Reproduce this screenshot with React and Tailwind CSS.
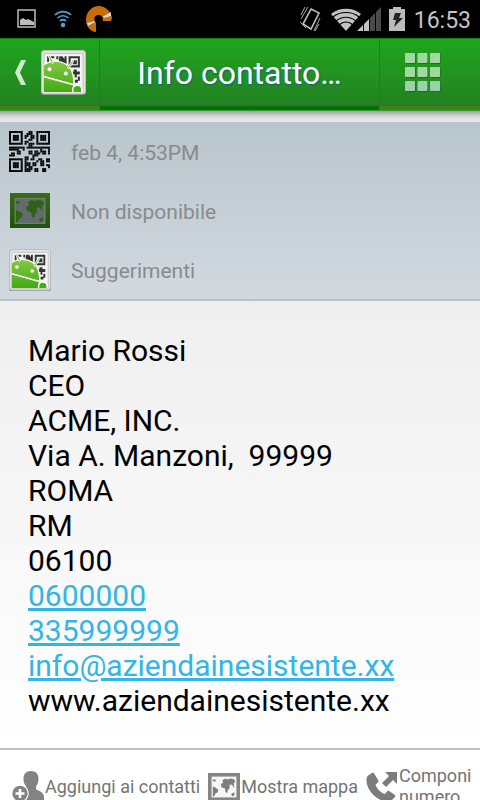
const QR = [
  '#######...##..#######',
  '#.....#..###..#.....#',
  '#.###.#.##.##.#.###.#',
  '#.###.#.#..##.#.###.#',
  '#.###.#...##..#.###.#',
  '#.....#.##....#.....#',
  '#######.#.###.#######',
  '..........##.........',
  '########.############',
  '#####..#........#...#',
  '....##....##.##.###.#',
  '.##.##....##.###.##.#',
  '###.........###......',
  '........##..#........',
  '#######.##.##..##..##',
  '#.....#.#.....#.##.##',
  '#.###.#.###.##..##...',
  '#.###.#.###.##..##.##',
  '#.###.#.#.##........#',
  '#.....#.####.##..##..',
  '#######.###..##..##..',
]

const GRID = [0, 1, 2]

function QrModules() {
  return QR.map((row, y) =>
    [...row].map((cell, x) =>
      cell === '#' ? <rect key={`${x}-${y}`} x={x} y={y} width="1.03" height="1.03" /> : null,
    ),
  )
}

function QrIcon() {
  return (
    <svg viewBox="0 0 21 21" className="size-[41px]" aria-hidden="true">
      <QrModules />
    </svg>
  )
}

function DroidIcon({ className }) {
  return (
    <svg viewBox="0 0 44 44" className={className} aria-hidden="true">
      <defs>
        <linearGradient id="droidBody" x1="0" y1="0" x2="0" y2="1">
          <stop offset="0" stopColor="#86c93f" />
          <stop offset="1" stopColor="#3fa816" />
        </linearGradient>
        <clipPath id="droidClip">
          <rect x="3" y="3" width="38" height="38" />
        </clipPath>
      </defs>
      <rect x="0" y="1" width="44" height="43" rx="3" fill="#777" opacity="0.7" />
      <rect x="0.5" y="0.5" width="43" height="42.5" rx="3" fill="#e3e3e3" stroke="#bcbcbc" />
      <rect x="3" y="3.5" width="38" height="37" fill="#f4f4f4" stroke="#c4c4c4" strokeWidth="1" />
      <g clipPath="url(#droidClip)">
        <g fill="#333">
          <path d="M6 6h7v2H8v5H6zM15 6h2v3h-2zM18 6h3l2 3V6h2v8h-3l-2-3-1 3h-2z" />
          <path fillRule="evenodd" d="M27 6h11v11H27zM29 8v7h7V8z" />
          <path d="M31 10h4v4h-4zM32 19h3v2h3v3h-3v3h-2v-3h-2v-3h1zM36 26h2v4h-2zM33 29h3v3h-3z" />
        </g>
        <path
          d="M2 15C10 9 22 10 28 17c4 5 5 12 4 25H2z"
          fill="url(#droidBody)"
          stroke="#fff"
          strokeWidth="1.200"
        />
        <path d="M11 12 8 6M27 17l4-6" stroke="#fff" strokeWidth="2.600" strokeLinecap="round" />
        <path d="M11 12 8 6M27 17l4-6" stroke="#8cc84a" strokeWidth="1.300" strokeLinecap="round" />
        <path d="M3 26 32 34" stroke="#fff" strokeWidth="1.600" />
        <path d="M31 42v-3c0-6 9-6 9 0v3z" fill="#46aa1c" stroke="#fff" strokeWidth="1.500" />
        <circle cx="8.3" cy="18.8" r="1.900" fill="#fff" />
        <circle cx="24.3" cy="23" r="1.900" fill="#fff" />
      </g>
    </svg>
  )
}

function Continents() {
  return (
    <>
      <path d="M6 8h3l1 2-2 1-2-1zM6 17l3 1 4 3-1 3-3 2-1 3H6z" />
      <path d="M18 9l4-2 2 1 4-1 5 1 1 3-2 2 1 2-3 1-1-2-2 1v4l-2 2-1 4-2-1-1-5-4-1-1-4 3-2z" />
      <path d="M31 15l2 2-1 2zM29 26l4-2v4l-3 1z" />
    </>
  )
}

function GreenMapIcon() {
  return (
    <svg viewBox="0 0 40 35" className="h-[35px] w-10" aria-hidden="true">
      <defs>
        <linearGradient id="mapFrame" x1="0" y1="0" x2="0" y2="1">
          <stop offset="0" stopColor="#386c1b" />
          <stop offset="1" stopColor="#24500f" />
        </linearGradient>
      </defs>
      <rect width="40" height="35" fill="url(#mapFrame)" />
      <rect x="5" y="5.5" width="30" height="25" fill="#626c6c" stroke="#6f8261" />
      <g fill="#2f6119">
        <Continents />
      </g>
    </svg>
  )
}

function GreyMapIcon() {
  return (
    <svg viewBox="0 0 40 35" className="h-7 w-8 shrink-0" aria-hidden="true">
      <rect width="40" height="35" fill="#858585" />
      <rect x="4.5" y="4.5" width="31" height="26" fill="#f6f6f6" />
      <g fill="#7e7e7e">
        <Continents />
      </g>
    </svg>
  )
}

function AddPersonIcon() {
  return (
    <svg viewBox="0 0 32 32" className="size-8 shrink-0" aria-hidden="true">
      <path
        d="M19 0c5 0 7.500 3 7.500 7.500 0 4-1 6-2.500 8v3c4 1.500 8 3.500 8 7.500v3H10V19l4-2v-2c-2-2-2.500-4-2.500-7.500C11.500 3 14 0 19 0z"
        fill="#838383"
      />
      <circle cx="8" cy="22.500" r="8.800" fill="#fff" />
      <circle cx="8" cy="22.500" r="7.700" fill="#838383" />
      <path d="M8 18v9M3.500 22.500h9" stroke="#fff" strokeWidth="2.600" />
    </svg>
  )
}

function CallIcon() {
  return (
    <svg viewBox="0 0 32 32" className="size-8 shrink-0" aria-hidden="true">
      <path
        d="M6 2 1.500 5C-1 9 1 17 6 22.500S19 32 24.500 30.500L29 26c.6-1 .3-1.600-.5-2.200l-5-3.600c-1-.6-1.800-.4-2.500.4l-2 2.400c-4-1-8.500-5.500-9.500-9.500l2.300-2c.8-.7.9-1.400.4-2.300L8.300 2.700C7.700 1.800 7 1.500 6 2z"
        fill="#7c7c7c"
      />
      <path d="M19 1h12v12l-4-4-7 7-4-4 7-7z" fill="#7c7c7c" />
    </svg>
  )
}

function StatusBar() {
  return (
    <div className="flex h-[38px] shrink-0 items-center bg-black pr-[9px] pl-[17px]">
      <div className="flex items-center gap-[17px]">
        <svg viewBox="0 0 20 20" className="size-5" aria-hidden="true">
          <rect x="1" y="1" width="17" height="17" fill="none" stroke="#bcbcbc" strokeWidth="1.500" />
          <path d="M3 16v-5l3-2 3 2 2-1 2 1 4 2v3z" fill="#bcbcbc" />
        </svg>
        <svg viewBox="0 0 18 18" className="size-[18px]" aria-hidden="true">
          <g fill="none" stroke="#5b9cc4" strokeWidth="1.700">
            <path d="M1 5C5.500.5 12.500.5 17 5M3.500 8c3-3 8-3 11 0M6 11c1.800-1.500 4.200-1.500 6 0" />
          </g>
          <circle cx="9" cy="15" r="2.300" fill="#5b9cc4" />
        </svg>
        <svg viewBox="0 0 26 27" className="-ml-[3px] h-[27px] w-[26px]" aria-hidden="true">
          <path d="M13 0C6 0 0 6 0 13.500S5 26 10 26V17L8.500 14c0-6 8.500-6 8.500 0l-1 1h9l1-3C25 5 19 0 13 0z" fill="#c76e0b" />
          <circle cx="12.500" cy="13" r="4" />
          <path d="m17 10.500 8-4.500v4l-7 2zM1 17l8-2v1l-7 4z" fill="#d5d5d5" />
        </svg>
      </div>
      <div className="ml-auto flex items-center">
        <svg viewBox="0 0 22 26" className="mr-[10px] h-[26px] w-[22px]" aria-hidden="true">
          <g fill="none" stroke="#bcbcbc">
            <path d="m12 3 8 4-8 16-8-5z" strokeWidth="1.600" />
            <path d="m9 1-7 12M6 1 2 9M21 12l-6 13M20 18l-4 7M1 16l6 6" strokeWidth="0.900" />
          </g>
        </svg>
        <svg viewBox="0 0 30 23" className="h-[23px] w-[30px]" aria-hidden="true">
          <path d="M0 6C8-1 22-1 30 6L15 23z" fill="#c2c2c2" />
          <g fill="none" stroke="#000" strokeWidth="1.200">
            <path d="M2 9c7-6 19-6 26 0M5 13c6-5 14-5 20 0M8 17c4-4 10-4 14 0" />
          </g>
        </svg>
        <svg viewBox="0 0 24 24" className="-ml-1 size-6" aria-hidden="true">
          <path d="M0 24 6 18v6zM7 17l5-5v12H7z" fill="#c2c2c2" />
          <path d="m13 11 5-5v18h-5zM19 5l5-5v24h-5z" fill="#4a4a4a" />
        </svg>
        <svg viewBox="0 0 16 24" className="ml-2 h-6 w-4" aria-hidden="true">
          <path d="M4 0h8v2h4v22H0V2h4z" fill="#bcbcbc" />
          <path d="M6 6h6l-2 5h4L5 20l2-7H4z" fill="#222" />
        </svg>
        <span className="ml-[9px] pt-[3px] text-[23px] leading-7 text-[#c4c4c4]">16:53</span>
      </div>
    </div>
  )
}

function TopBar() {
  return (
    <header className="flex h-[73px] shrink-0 border-b border-[#28a023] bg-linear-to-b from-[#1ea71b] to-[#237e22]">
      <button
        type="button"
        aria-label="Indietro"
        className="flex w-[100px] items-center border-t border-r border-b-4 border-t-[#118512] border-r-[#1a7f1c] border-b-[#44801c] pl-[15px]"
      >
        <svg viewBox="0 0 12 25" className="h-[25px] w-3" aria-hidden="true">
          <path d="M6 0h5L5 12.500 11 25H6L0 12.500z" fill="#cdeccd" />
        </svg>
        <DroidIcon className="ml-[14px] size-[45px]" />
      </button>
      <h1 className="flex min-w-0 flex-1 items-center justify-center border-t border-b-4 border-t-[#118512] border-b-[#0d6a10] text-[32px] text-white [text-shadow:1px_1px_2px_#10607c]">
        Info contatto…
      </h1>
      <button
        type="button"
        aria-label="Menu"
        className="flex w-[101px] items-center border-t border-b-4 border-l border-t-[#118512] border-b-[#44801c] border-l-[#1a7f1c] pl-[25px]"
      >
        <svg viewBox="0 0 36 39" className="h-[39px] w-9" aria-hidden="true">
          {GRID.map((r) =>
            GRID.map((c) => (
              <g key={`${r}-${c}`}>
                <rect x={c * 12.5 + 0.5} y={r * 14 + 0.8} width="10" height="10" rx="1" fill="#17661b" />
                <rect x={c * 12.5} y={r * 14} width="10" height="10" rx="1" fill={r === 2 ? '#9bd0ad' : '#a2d8a0'} />
              </g>
            )),
          )}
        </svg>
      </button>
    </header>
  )
}

function InfoRow({ icon, children }) {
  return (
    <li className="flex h-[59px] items-center">
      <span className="flex w-[59px] justify-center">{icon}</span>
      <span className="ml-3 pt-[3px] text-[21px] leading-7 text-[#8a8a8e]">{children}</span>
    </li>
  )
}

const LINES = [
  { text: 'Mario Rossi' },
  { text: 'CEO' },
  { text: 'ACME, INC.' },
  { text: 'Via A. Manzoni,  99999' },
  { text: 'ROMA' },
  { text: 'RM' },
  { text: '06100' },
  { text: '0600000', href: 'tel:0600000' },
  { text: '335999999', href: 'tel:335999999' },
  { text: 'info@aziendainesistente.xx', href: 'mailto:info@aziendainesistente.xx' },
  { text: 'www.aziendainesistente.xx' },
]

function Action({ icon, className, children }) {
  return (
    <button type="button" className={`flex items-center gap-px text-left ${className}`}>
      {icon}
      <span className="pb-[2px]">{children}</span>
    </button>
  )
}

export default function App() {
  return (
    <div className="flex h-screen flex-col overflow-hidden bg-white font-[Roboto,sans-serif]">
      <StatusBar />
      <TopBar />
      <div className="h-[11px] shrink-0 bg-linear-to-b from-[#a0a0a0] via-[#d8d8d8] to-[#ececec]" />
      <ul className="shrink-0 border-b-2 border-[#bcc2c7] bg-linear-to-b from-[#b9c5cc] to-[#d2dae0]">
        <InfoRow icon={<QrIcon />}>feb 4, 4:53PM</InfoRow>
        <InfoRow icon={<GreenMapIcon />}>Non disponibile</InfoRow>
        <InfoRow icon={<DroidIcon className="size-[42px]" />}>Suggerimenti</InfoRow>
      </ul>
      <main className="shrink-0 bg-linear-to-b from-[#efefef] to-white px-7 pt-8 pb-[30px] text-[30px] leading-[35px] text-black">
        {LINES.map(({ text, href }) => (
          <p key={text} className="whitespace-pre">
            {href ? (
              <a href={href} className="text-[#33b5e5] underline">
                {text}
              </a>
            ) : (
              text
            )}
          </p>
        ))}
      </main>
      <footer className="flex h-[76px] shrink-0 gap-2 border-t-2 border-[#bcc2c7] pl-3 text-[18px] leading-[21px] text-[#747474]">
        <Action icon={<AddPersonIcon />} className="shrink-0">
          Aggiungi ai contatti
        </Action>
        <Action icon={<GreyMapIcon />} className="shrink-0">
          Mostra mappa
        </Action>
        <Action icon={<CallIcon />} className="min-w-0 flex-1">
          Componi numero
        </Action>
      </footer>
    </div>
  )
}
